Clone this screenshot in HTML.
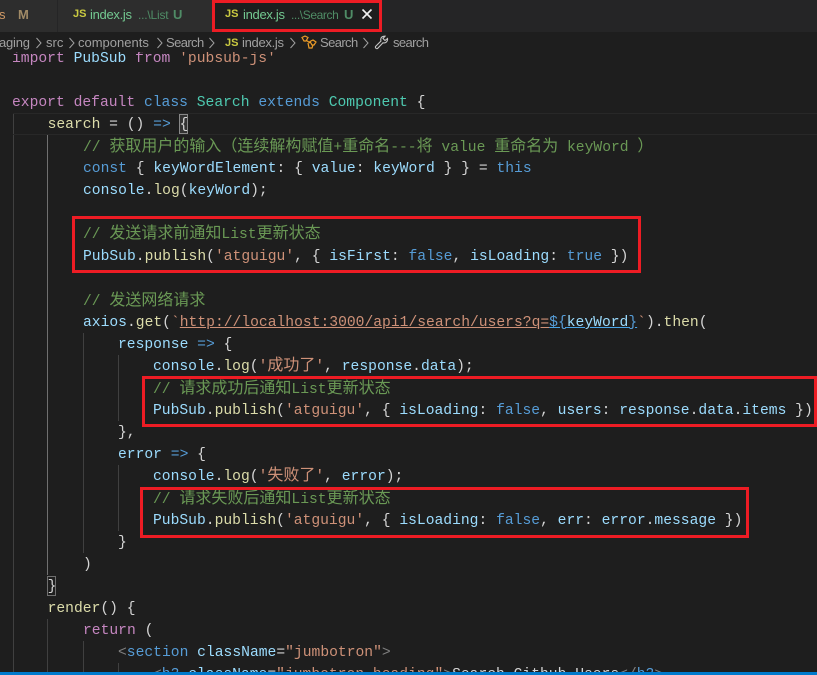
<!DOCTYPE html>
<html><head><meta charset="utf-8">
<style>
html,body{margin:0;padding:0;background:#1e1e1e}
#r{position:relative;width:817px;height:675px;overflow:hidden;background:#1e1e1e;font-family:"Liberation Mono","Noto Sans CJK SC",monospace;font-size:14.67px;color:#d4d4d4}
.l{position:absolute;height:22px;line-height:22px;white-space:pre;left:0;margin-top:1px}
.l i{font-style:normal;font-size:16px;font-family:"Noto Sans CJK SC",sans-serif;line-height:0}
.k{color:#c586c0}.b{color:#569cd6}.v{color:#9cdcfe}.f{color:#dcdcaa}.s{color:#ce9178}.c{color:#6a9955}.t{color:#4ec9b0}.g{color:#808080}
.gd{position:absolute;width:1px;background:#404040}
.box{position:absolute;border:3px solid #ed1c24;box-sizing:border-box}
.ui{position:absolute;font-family:"Liberation Sans","Noto Sans CJK SC",sans-serif;white-space:pre}
.js{position:absolute;font:bold 11px "Liberation Sans",sans-serif;color:#cbcb41}
</style></head><body>
<div id="r">

<div class="gd" style="left:13px;top:113px;height:562px"></div>
<div class="gd" style="left:47px;top:135px;height:440px;background:#707070"></div>
<div class="gd" style="left:47px;top:619px;height:56px"></div>
<div class="gd" style="left:83px;top:333px;height:220px"></div>
<div class="gd" style="left:83px;top:641px;height:34px"></div>
<div class="gd" style="left:118px;top:355px;height:66px"></div>
<div class="gd" style="left:118px;top:465px;height:66px"></div>
<div class="gd" style="left:118px;top:663px;height:12px"></div>

<div style="position:absolute;left:13px;right:0;top:113px;height:22px;box-sizing:border-box;border-top:1px solid #282828;border-bottom:1px solid #282828"></div>
<div style="position:absolute;left:179px;top:114px;width:9px;height:20px;box-sizing:border-box;border:1px solid #888;background:#333"></div>
<div style="position:absolute;left:47px;top:576px;width:9px;height:20px;box-sizing:border-box;border:1px solid #707070"></div>

<div class="l" style="top:47px;left:12px"><span class="k">import</span> <span class="v">PubSub</span> <span class="k">from</span> <span class="s">'pubsub-js'</span></div>
<div class="l" style="top:91px;left:12px"><span class="k">export</span> <span class="k">default</span> <span class="b">class</span> <span class="t">Search</span> <span class="b">extends</span> <span class="t">Component</span> {</div>
<div class="l" style="top:113px;left:47.6px"><span class="f">search</span> = () <span class="b">=&gt;</span> {</div>
<div class="l c" style="top:136px;left:83px">// <i>获取用户的输入（连续解构赋值</i>+<i>重命名</i>---<i>将</i> value <i>重命名为</i> keyWord <i>）</i></div>
<div class="l" style="top:157px;left:83px"><span class="b">const</span> { <span class="v">keyWordElement</span>: { <span class="v">value</span>: <span class="v">keyWord</span> } } = <span class="b">this</span></div>
<div class="l" style="top:179px;left:83px"><span class="v">console</span>.<span class="f">log</span>(<span class="v">keyWord</span>);</div>
<div class="l c" style="top:223px;left:83px">// <i>发送请求前通知</i>List<i>更新状态</i></div>
<div class="l" style="top:245px;left:83px"><span class="v">PubSub</span>.<span class="f">publish</span>(<span class="s">'atguigu'</span>, { <span class="v">isFirst</span>: <span class="b">false</span>, <span class="v">isLoading</span>: <span class="b">true</span> })</div>
<div class="l c" style="top:290px;left:83px">// <i>发送网络请求</i></div>
<div class="l" style="top:311px;left:83px"><span class="v">axios</span>.<span class="f">get</span>(<span class="s">`<u>http://localhost:3000/api1/search/users?q=</u></span><u style="color:#569cd6;text-decoration-color:#4aa5e8">${<span class="v">keyWord</span>}</u><span class="s">`</span>).<span class="f">then</span>(</div>
<div class="l" style="top:333px;left:118px"><span class="v">response</span> <span class="b">=&gt;</span> {</div>
<div class="l" style="top:355px;left:153px"><span class="v">console</span>.<span class="f">log</span>(<span class="s">'<i>成功了</i>'</span>, <span class="v">response</span>.<span class="v">data</span>);</div>
<div class="l c" style="top:378px;left:153px">// <i>请求成功后通知</i>List<i>更新状态</i></div>
<div class="l" style="top:399px;left:153px"><span class="v">PubSub</span>.<span class="f">publish</span>(<span class="s">'atguigu'</span>, { <span class="v">isLoading</span>: <span class="b">false</span>, <span class="v">users</span>: <span class="v">response</span>.<span class="v">data</span>.<span class="v">items</span> })</div>
<div class="l" style="top:421px;left:118px">},</div>
<div class="l" style="top:443px;left:118px"><span class="v">error</span> <span class="b">=&gt;</span> {</div>
<div class="l" style="top:465px;left:153px"><span class="v">console</span>.<span class="f">log</span>(<span class="s">'<i>失败了</i>'</span>, <span class="v">error</span>);</div>
<div class="l c" style="top:488px;left:153px">// <i>请求失败后通知</i>List<i>更新状态</i></div>
<div class="l" style="top:509px;left:153px"><span class="v">PubSub</span>.<span class="f">publish</span>(<span class="s">'atguigu'</span>, { <span class="v">isLoading</span>: <span class="b">false</span>, <span class="v">err</span>: <span class="v">error</span>.<span class="v">message</span> })</div>
<div class="l" style="top:531px;left:118px">}</div>
<div class="l" style="top:553px;left:83px">)</div>
<div class="l" style="top:575px;left:47.6px">}</div>
<div class="l" style="top:597px;left:47.6px"><span class="f">render</span>() {</div>
<div class="l" style="top:619px;left:83px"><span class="k">return</span> (</div>
<div class="l" style="top:641px;left:118px"><span class="g">&lt;</span><span class="b">section</span> <span class="v">className</span>=<span class="s">"jumbotron"</span><span class="g">&gt;</span></div>
<div class="l" style="top:663px;left:153px"><span class="g">&lt;</span><span class="b">h3</span> <span class="v">className</span>=<span class="s">"jumbotron-heading"</span><span class="g">&gt;</span>Search Github Users<span class="g">&lt;/</span><span class="b">h3</span><span class="g">&gt;</span></div>

<div style="position:absolute;left:0;top:672px;width:817px;height:3px;background:#007acc"></div>

<div style="position:absolute;left:0;top:0;width:817px;height:32px;background:#252526"></div>
<div style="position:absolute;left:0;top:0;width:57px;height:32px;background:#2d2d2d"></div>
<div style="position:absolute;left:57px;top:0;width:155px;height:32px;background:#2d2d2d;border-left:1px solid #252526;box-sizing:border-box"></div>
<div style="position:absolute;left:212px;top:0;width:170px;height:32px;background:#1e1e1e"></div>
<div style="position:absolute;left:0;top:32px;width:817px;height:20px;background:#1e1e1e"></div>

<div class="ui" style="left:-1px;top:7px;font-size:13px;color:#d19a66">s</div>
<div class="ui" style="left:18px;top:7px;font-size:13px;font-weight:bold;color:#a08a66">M</div>
<div class="js" style="left:73px;top:8px">JS</div>
<div class="ui" style="left:90px;top:7px;font-size:13px;letter-spacing:-.3px;color:#73c991">index.js</div>
<div class="ui" style="left:138px;top:8px;font-size:12px;letter-spacing:-.2px;color:#4f8c66">...\List</div>
<div class="ui" style="left:173px;top:7px;font-size:13px;color:#4f8c66;font-weight:bold">U</div>

<div class="js" style="left:225px;top:8px">JS</div>
<div class="ui" style="left:243px;top:7px;font-size:13px;letter-spacing:-.3px;color:#73c991">index.js</div>
<div class="ui" style="left:291px;top:8px;font-size:12px;letter-spacing:-.4px;color:#4f8c66">...\Search</div>
<div class="ui" style="left:344px;top:7px;font-size:13px;font-weight:bold;color:#4f8c66">U</div>
<svg style="position:absolute;left:361px;top:8px" width="12" height="12" viewBox="0 0 12 12"><path d="M1.5 1.5L10.5 10.5M10.5 1.5L1.5 10.5" stroke="#f0f0f0" stroke-width="1.6" fill="none"/></svg>

<div class="ui" style="left:-1px;top:35px;font-size:13px;letter-spacing:-.2px;color:#a0a0a0">aging</div>
<svg style="position:absolute;left:35px;top:36px" width="8" height="14" viewBox="0 0 8 14"><path d="M1.5 2L6 7L1.5 12" stroke="#a0a0a0" fill="none"/></svg>
<div class="ui" style="left:46px;top:35px;font-size:13px;color:#a0a0a0">src</div>
<svg style="position:absolute;left:68px;top:36px" width="8" height="14" viewBox="0 0 8 14"><path d="M1.5 2L6 7L1.5 12" stroke="#a0a0a0" fill="none"/></svg>
<div class="ui" style="left:78px;top:35px;font-size:13px;color:#a0a0a0">components</div>
<svg style="position:absolute;left:156px;top:36px" width="8" height="14" viewBox="0 0 8 14"><path d="M1.5 2L6 7L1.5 12" stroke="#a0a0a0" fill="none"/></svg>
<div class="ui" style="left:166px;top:35px;font-size:13px;letter-spacing:-.6px;color:#a0a0a0">Search</div>
<svg style="position:absolute;left:208px;top:36px" width="8" height="14" viewBox="0 0 8 14"><path d="M1.5 2L6 7L1.5 12" stroke="#a0a0a0" fill="none"/></svg>
<div class="js" style="left:225px;top:37px">JS</div>
<div class="ui" style="left:242px;top:35px;font-size:13px;letter-spacing:-.3px;color:#a0a0a0">index.js</div>
<svg style="position:absolute;left:289px;top:36px" width="8" height="14" viewBox="0 0 8 14"><path d="M1.5 2L6 7L1.5 12" stroke="#a0a0a0" fill="none"/></svg>
<svg style="position:absolute;left:301px;top:35px" width="16" height="15" viewBox="0 0 16 15"><path d="M1 2.5L4 1L7 2.5L5 6L3 6ZM5 5L9 8M9 6.5L12 5L15 7L13 10L11 10ZM7 8L8 13L11 13L12 10" stroke="#ee9d28" stroke-width="1.2" fill="none"/></svg>
<div class="ui" style="left:320px;top:35px;font-size:13px;letter-spacing:-.6px;color:#a0a0a0">Search</div>
<svg style="position:absolute;left:362px;top:36px" width="8" height="14" viewBox="0 0 8 14"><path d="M1.5 2L6 7L1.5 12" stroke="#a0a0a0" fill="none"/></svg>
<svg style="position:absolute;left:374px;top:35px" width="15" height="15" viewBox="0 0 15 15"><path d="M1.5 11.5L7 6C6 3 8 1 11 1.2L9 3.5L11 5.5L13.5 3.5C14 6.5 11.5 8.5 9 7.8L3.5 13.5C2.5 14 1 13 1.5 11.5Z" stroke="#c5c5c5" stroke-width="1.1" fill="none"/></svg>
<div class="ui" style="left:393px;top:35px;font-size:13px;letter-spacing:-.6px;color:#a0a0a0">search</div>

<div class="box" style="left:212px;top:0;width:170px;height:32px"></div>
<div class="box" style="left:72px;top:216px;width:569px;height:57px"></div>
<div class="box" style="left:142px;top:376px;width:675px;height:51px"></div>
<div class="box" style="left:140px;top:487px;width:609px;height:51px"></div>
</div>
</body></html>
